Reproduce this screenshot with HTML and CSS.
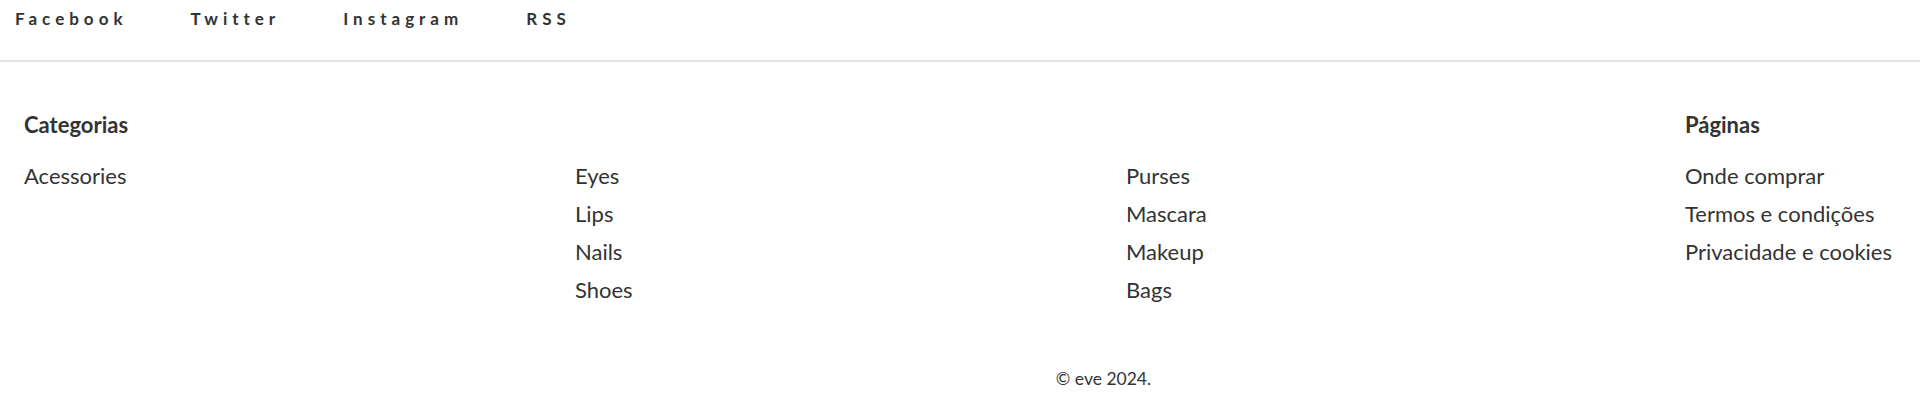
FILE: index.html
```html
<!DOCTYPE html>
<html lang="pt">
<head>
<meta charset="utf-8">
<title>eve</title>
<link rel="stylesheet" href="styles.css">
</head>
<body>
<nav class="social">
  <a href="#">Facebook</a>
  <a href="#">Twitter</a>
  <a href="#">Instagram</a>
  <a href="#">RSS</a>
</nav>
<footer class="footer">
  <div class="cols">
    <section class="cats">
      <h3 class="heading">Categorias</h3>
      <div class="cat-grid">
        <ul class="links">
          <li><a href="#">Acessories</a></li>
        </ul>
        <ul class="links">
          <li><a href="#">Eyes</a></li>
          <li><a href="#">Lips</a></li>
          <li><a href="#">Nails</a></li>
          <li><a href="#">Shoes</a></li>
        </ul>
        <ul class="links">
          <li><a href="#">Purses</a></li>
          <li><a href="#">Mascara</a></li>
          <li><a href="#">Makeup</a></li>
          <li><a href="#">Bags</a></li>
        </ul>
      </div>
    </section>
    <section class="pages">
      <h3 class="heading">Páginas</h3>
      <ul class="links">
        <li><a href="#">Onde comprar</a></li>
        <li><a href="#">Termos e condições</a></li>
        <li><a href="#">Privacidade e cookies</a></li>
      </ul>
    </section>
  </div>
  <p class="copy">© eve 2024.</p>
</footer>
</body>
</html>
```
FILE: styles.css
```css
html, body {
  margin: 0;
  padding: 0;
  background: #fff;
}
body {
  font-family: Lato, "Open Sans", sans-serif;
  color: #333;
}
a {
  color: inherit;
  text-decoration: none;
}
.social {
  display: flex;
  gap: 63px;
  padding: 9px 0 0 15px;
  height: 51px;
  border-bottom: 2px solid #e6e6e6;
}
.social a {
  font-size: 17px;
  line-height: 19px;
  font-weight: 700;
  letter-spacing: 5px;
}
.footer {
  padding: 50px 28px 24px 24px;
}
.cols {
  display: grid;
  grid-template-columns: 1fr auto;
  column-gap: 8px;
}
.heading {
  margin: 0;
  font-size: 22px;
  font-weight: 700;
  line-height: 25px;
}
.cat-grid {
  display: grid;
  grid-template-columns: repeat(3, 1fr);
}
.links {
  list-style: none;
  margin: 20px 0 0;
  padding: 0;
}
.links li {
  font-size: 22px;
  line-height: 38px;
}
.copy {
  margin: 60px 0 0;
  padding-left: 291px;
  text-align: center;
  font-size: 17.5px;
  line-height: 20px;
}
```
